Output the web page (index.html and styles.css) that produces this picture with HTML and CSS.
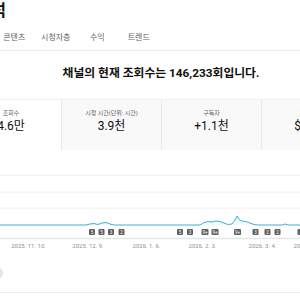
FILE: index.html
```html
<!DOCTYPE html>
<html>

<head>
  <title>채널 분석</title>
  <link rel="stylesheet" href="styles.css">
</head>

<body>
  <div class="header">
    <h1 class="title">채널 분석</h1>
    <div class="tabs">
      <span class="tab">개요</span>
      <span class="tab">콘텐츠</span>
      <span class="tab">시청자층</span>
      <span class="tab">수익</span>
      <span class="tab">트렌드</span>
    </div>
  </div>

  <h2 class="headline">채널의 현재 조회수는 146,233회입니다.</h2>

  <div class="cards">
    <div class="card active">
      <div class="card-label">조회수</div>
      <div class="card-value">4.6만</div>
    </div>
    <div class="card">
      <div class="card-label">시청 시간(단위: 시간)</div>
      <div class="card-value">3.9천</div>
    </div>
    <div class="card">
      <div class="card-label">구독자</div>
      <div class="card-value">+1.1천</div>
    </div>
    <div class="card">
      <div class="card-label">예상 수익</div>
      <div class="card-value">$1.2천</div>
    </div>
  </div>

  <div class="chart">
    <svg width="300" height="105" viewBox="0 0 300 105">
      <line class="grid" x1="0" y1="25" x2="300" y2="25" />
      <line class="grid" x1="0" y1="42" x2="300" y2="42" />
      <line class="grid" x1="0" y1="58" x2="300" y2="58" />
      <path class="area"
        d="M0,75 L86,75 L90,74 L94,73.5 L98,74.5 L102,73 L106,72.5 L110,74 L114,75 L200,75 L204,72.5 L208,71.5 L212,72 L216,71 L220,71.5 L224,73 L228,74.5 L232,74 L235,70 L237,66 L239,69.5 L242,71 L246,71.5 L250,73 L254,74.5 L258,75 L282,75 L285,74 L288,75 L300,75 Z" />
      <path class="line"
        d="M0,75 L86,75 L90,74 L94,73.5 L98,74.5 L102,73 L106,72.5 L110,74 L114,75 L200,75 L204,72.5 L208,71.5 L212,72 L216,71 L220,71.5 L224,73 L228,74.5 L232,74 L235,70 L237,66 L239,69.5 L242,71 L246,71.5 L250,73 L254,74.5 L258,75 L282,75 L285,74 L288,75 L300,75" />

      <g class="marks">
        <rect x="89" y="79" width="6" height="6" /><text x="92" y="83.8">5</text>
        <rect x="98.5" y="79" width="6" height="6" /><text x="101.5" y="83.8">5</text>
        <rect x="108" y="79" width="6" height="6" /><text x="111" y="83.8">3</text>
        <rect x="118.5" y="79" width="6" height="6" /><text x="121.5" y="83.8">2</text>
        <rect x="177" y="79" width="6" height="6" /><text x="180" y="83.8">5</text>
        <rect x="187" y="79" width="6" height="6" /><text x="190" y="83.8">3</text>
        <rect x="201.5" y="79" width="7" height="6" /><text x="205" y="83.8">9+</text>
        <rect x="211.5" y="79" width="7" height="6" /><text x="215" y="83.8">9+</text>
        <rect x="234" y="79" width="7" height="6" /><text x="237.5" y="83.8">9+</text>
        <rect x="252.5" y="79" width="6" height="6" /><text x="255.5" y="83.8">3</text>
        <rect x="264.5" y="79" width="6" height="6" /><text x="267.5" y="83.8">2</text>
        <rect x="274.5" y="79" width="6" height="6" /><text x="277.5" y="83.8">2</text>
        <rect x="297.5" y="79" width="6" height="6" /><text x="300.5" y="83.8">3</text>
      </g>

      <line class="axis" x1="0" y1="88.5" x2="300" y2="88.5" />

      <g class="dates">
        <text x="28.5" y="98">2025. 11. 10.</text>
        <text x="88" y="98">2025. 12. 9.</text>
        <text x="146.5" y="98">2026. 1. 6.</text>
        <text x="202.5" y="98">2026. 2. 3.</text>
        <text x="262.5" y="98">2026. 3. 4.</text>
        <text x="307.5" y="98">2026. 4. 1.</text>
      </g>
    </svg>
  </div>

  <div class="footer">
    <span class="more-btn"></span>
  </div>
</body>

</html>
```

FILE: styles.css
```css
html,
body {
  margin: 0;
  padding: 0;
  width: 300px;
  height: 300px;
  overflow: hidden;
  background-color: #fff;
  font-family: Roboto, "Noto Sans CJK KR", sans-serif;
  color: #0f0f0f;
}

.header {
  border-bottom: 1px solid #ececec;
}

.title {
  margin: 0 0 0 -57px;
  font-size: 16px;
  line-height: 22px;
  font-weight: 700;
  white-space: nowrap;
}

.tabs {
  display: flex;
  margin-top: 4px;
  margin-left: -48px;
  height: 24px;
}

.tab {
  flex: 0 0 41.5px;
  text-align: center;
  font-size: 8px;
  line-height: 24px;
  color: #606060;
}

.headline {
  margin: 12px 0 0 0;
  padding-left: 22px;
  text-align: center;
  font-size: 11.8px;
  line-height: 20px;
  font-weight: 700;
  white-space: nowrap;
}

.cards {
  display: flex;
  margin-top: 16px;
  margin-left: -39px;
  width: 400px;
  border-top: 1px solid #eeeeee;
}

.card {
  flex: 0 0 100px;
  box-sizing: border-box;
  height: 50px;
  padding-top: 9px;
  text-align: center;
  background-color: #f9f9f9;
  border-left: 1px solid #e8e8e8;
}

.card.active {
  background-color: #fff;
  border-left: none;
}

.card-label {
  font-size: 6px;
  line-height: 8px;
  color: #606060;
  white-space: nowrap;
}

.card-value {
  margin-top: 2px;
  font-size: 12px;
  line-height: 14px;
  white-space: nowrap;
}

.chart svg {
  display: block;
}

.grid {
  stroke: #eeeeee;
  stroke-width: 1;
}

.axis {
  stroke: #e5e5e5;
  stroke-width: 1.5;
}

.line {
  fill: none;
  stroke: #41b0d6;
  stroke-width: 1;
}

.area {
  fill: #41b0d6;
  opacity: 0.08;
}

.marks rect {
  fill: #5f5f5f;
  rx: 1;
}

.marks text {
  fill: #fff;
  font-size: 4.5px;
  font-family: Roboto, sans-serif;
  text-anchor: middle;
}

.dates text {
  fill: #909090;
  font-size: 6px;
  font-family: Roboto, sans-serif;
  text-anchor: middle;
}

.footer {
  box-sizing: border-box;
  height: 38px;
  padding-top: 12px;
  border-bottom: 1px solid #ececec;
}

.more-btn {
  display: block;
  margin-left: -9px;
  width: 12px;
  height: 12px;
  border-radius: 50%;
  background-color: #e5e5e5;
}
```
